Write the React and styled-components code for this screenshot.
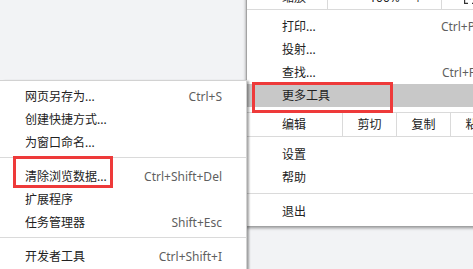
import React from "react";
import styled, { createGlobalStyle } from "styled-components";

const GlobalStyle = createGlobalStyle`
  html, body {
    margin: 0;
    padding: 0;
    background: #f2f3f5;
    overflow: hidden;
  }
`;

const Screen = styled.div`
  position: relative;
  width: 473px;
  height: 269px;
  overflow: hidden;
  background: #f2f3f5;
  font-family: "Noto Sans", "Noto Sans CJK SC", sans-serif;
  font-size: 12px;
  color: #222;
`;

const MainMenu = styled.div`
  position: absolute;
  left: 246px;
  top: -14px;
  width: 252px;
  background: #fff;
  border-left: 1px solid #a3a3a3;
  box-shadow: 0 2px 3px rgba(0, 0, 0, 0.4);
  padding-bottom: 3px;
`;

const SubMenu = styled.div`
  position: absolute;
  left: 0;
  top: 80px;
  width: 246px;
  height: 200px;
  background: #fff;
  border-top: 1px solid #d2d2d2;
  border-right: 1px solid #d2d2d2;
  box-shadow: 3px 0 2px -1px rgba(0, 0, 0, 0.35);
  padding-top: 4px;
  z-index: 2;
`;

const Group = styled.div`
  padding: ${(p) => p.$pad || "0"};
`;

const Item = styled.div`
  display: flex;
  align-items: center;
  justify-content: space-between;
  height: 23px;
  padding: 0 24px 0 ${(p) => p.$indent}px;
  background: ${(p) => (p.$active ? "#c8c8c8" : "transparent")};
  white-space: nowrap;
  line-height: 1;
`;

const Shortcut = styled.span`
  color: #5f5f5f;
`;

const Separator = styled.div`
  height: 1px;
  background: #dadada;
  margin: ${(p) => p.$top}px 0 ${(p) => p.$bottom}px;
`;

const ZoomRow = styled.div`
  display: flex;
  height: 23px;
  border-bottom: 1px solid #dadada;
  line-height: 1;
`;

const RowLabel = styled.div`
  display: flex;
  align-items: center;
  width: ${(p) => p.$width}px;
  padding-left: 35px;
  box-sizing: border-box;
  flex: none;
`;

const ZoomCell = styled.div`
  display: flex;
  align-items: center;
  justify-content: space-between;
  width: 115px;
  padding: 0 17px;
  box-sizing: border-box;
  border-left: 1px solid #dadada;
  border-right: 1px solid #dadada;
  flex: none;
`;

const FullCell = styled.div`
  display: flex;
  align-items: center;
  padding-left: 22px;
  flex: 1;
`;

const EditRow = styled.div`
  display: flex;
  height: 23px;
  border-top: 1px solid #dadada;
  border-bottom: 1px solid #dadada;
  line-height: 1;
`;

const EditCell = styled.div`
  display: flex;
  align-items: center;
  justify-content: center;
  width: 53px;
  border-left: 1px solid #dadada;
  flex: none;
`;

const Mark = styled.div`
  position: absolute;
  left: ${(p) => p.$x}px;
  top: ${(p) => p.$y}px;
  width: ${(p) => p.$w}px;
  height: ${(p) => p.$h}px;
  box-sizing: border-box;
  border: 3px solid #ee3a3a;
  z-index: 3;
  pointer-events: none;
`;

function FullscreenIcon() {
  return (
    <svg width="12" height="12" viewBox="0 0 12 12" fill="none" stroke="#333" strokeWidth="1.2">
      <path d="M0.6 4V0.6H4M8 0.6H11.4V4M11.4 8V11.4H8M4 11.4H0.6V8" />
    </svg>
  );
}

const saveItems = [
  ["网页另存为...", "Ctrl+S"],
  ["创建快捷方式...", ""],
  ["为窗口命名...", ""],
];
const toolItems = [
  ["清除浏览数据...", "Ctrl+Shift+Del"],
  ["扩展程序", ""],
  ["任务管理器", "Shift+Esc"],
];

export default function App() {
  return (
    <Screen>
      <GlobalStyle />
      <MainMenu>
        <ZoomRow>
          <RowLabel $width={80}>缩放</RowLabel>
          <ZoomCell>
            <span>－</span>
            <span>100%</span>
            <span>＋</span>
          </ZoomCell>
          <FullCell>
            <FullscreenIcon />
          </FullCell>
        </ZoomRow>
        <Group $pad="5px 0 5px">
          <Item $indent={35}>
            <span>打印...</span>
            <Shortcut>Ctrl+P</Shortcut>
          </Item>
          <Item $indent={35}>
            <span>投射...</span>
          </Item>
          <Item $indent={35}>
            <span>查找...</span>
            <Shortcut>Ctrl+F</Shortcut>
          </Item>
          <Item $indent={35} $active>
            <span>更多工具</span>
          </Item>
        </Group>
        <EditRow>
          <RowLabel $width={95}>编辑</RowLabel>
          <EditCell>剪切</EditCell>
          <EditCell>复制</EditCell>
          <EditCell>粘贴</EditCell>
        </EditRow>
        <Group $pad="6px 0 0">
          <Item $indent={35}>
            <span>设置</span>
          </Item>
          <Item $indent={35}>
            <span>帮助</span>
          </Item>
          <Separator $top={4} $bottom={6} />
          <Item $indent={35}>
            <span>退出</span>
          </Item>
        </Group>
      </MainMenu>

      <SubMenu>
        {saveItems.map(([label, key]) => (
          <Item key={label} $indent={25}>
            <span>{label}</span>
            {key && <Shortcut>{key}</Shortcut>}
          </Item>
        ))}
        <Separator $top={3} $bottom={7} />
        {toolItems.map(([label, key]) => (
          <Item key={label} $indent={25}>
            <span>{label}</span>
            {key && <Shortcut>{key}</Shortcut>}
          </Item>
        ))}
        <Separator $top={3} $bottom={7} />
        <Item $indent={25}>
          <span>开发者工具</span>
          <Shortcut>Ctrl+Shift+I</Shortcut>
        </Item>
      </SubMenu>

      <Mark $x={252} $y={82} $w={141} $h={31} />
      <Mark $x={13} $y={156} $w={100} $h={32} />
    </Screen>
  );
}
